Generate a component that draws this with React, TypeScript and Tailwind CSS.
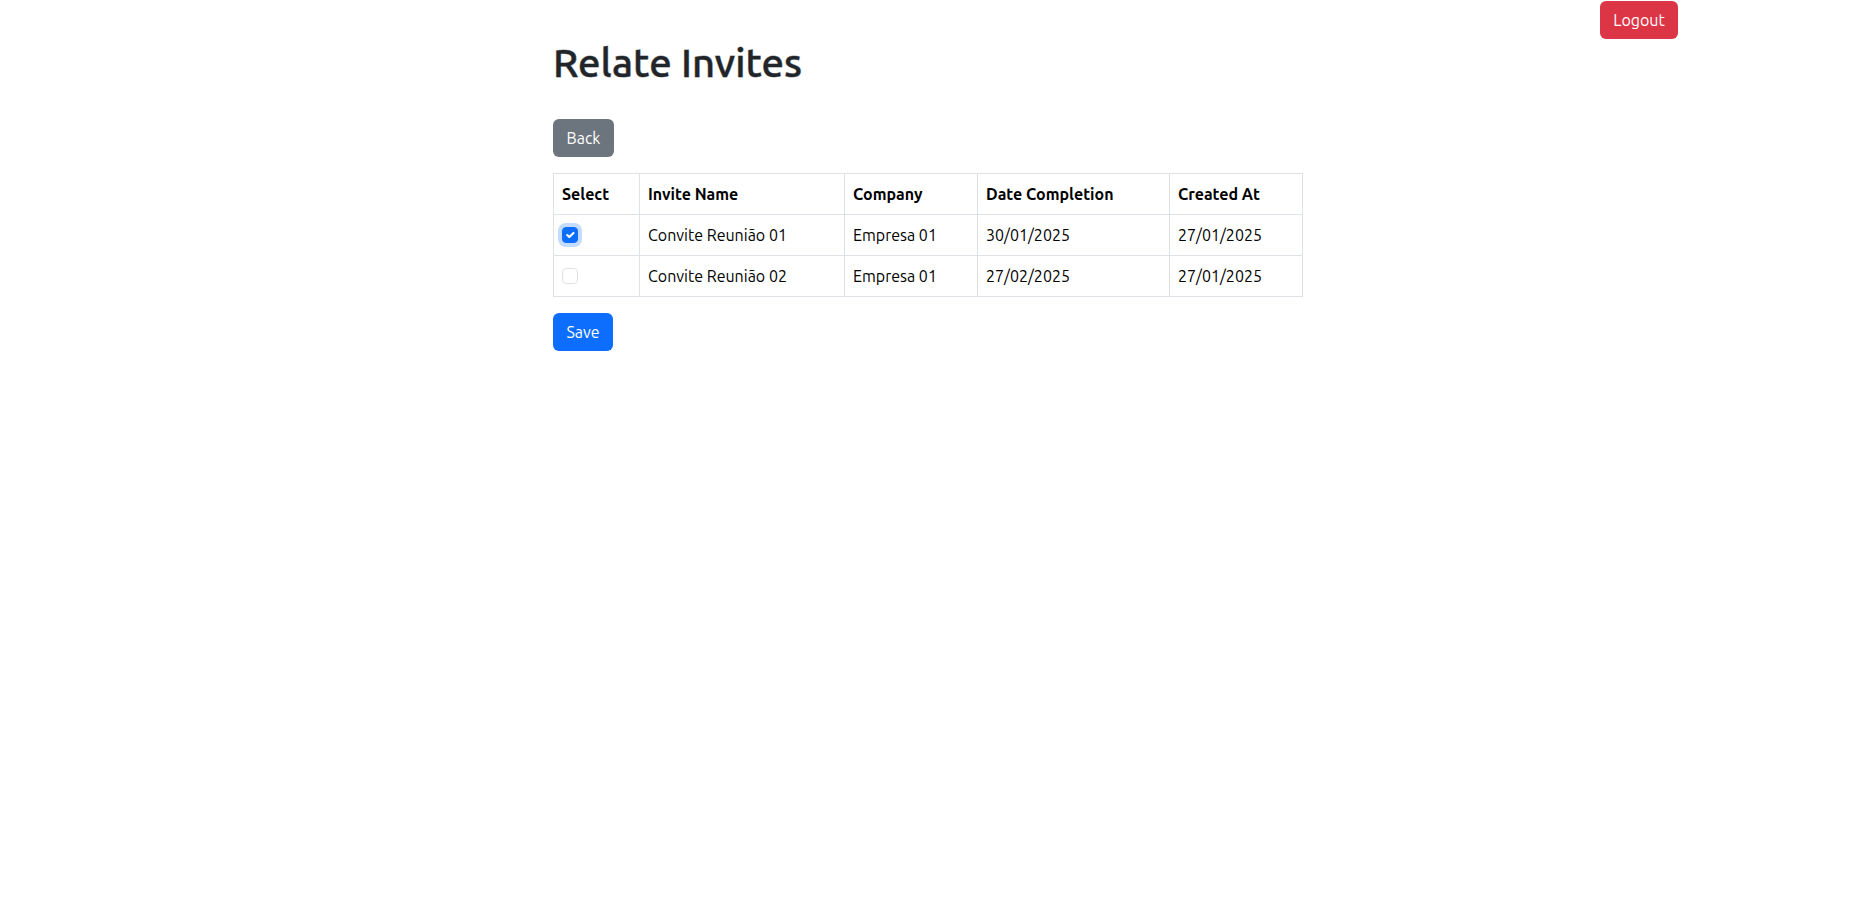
import { useState } from "react";

type Invite = {
  id: number;
  name: string;
  company: string;
  dateCompletion: string;
  createdAt: string;
};

const invites: Invite[] = [
  { id: 1, name: "Convite Reunião 01", company: "Empresa 01", dateCompletion: "30/01/2025", createdAt: "27/01/2025" },
  { id: 2, name: "Convite Reunião 02", company: "Empresa 01", dateCompletion: "27/02/2025", createdAt: "27/01/2025" },
];

const columns = [
  { label: "Select", width: "w-[86px]" },
  { label: "Invite Name", width: "w-[205px]" },
  { label: "Company", width: "w-[133px]" },
  { label: "Date Completion", width: "w-[192px]" },
  { label: "Created At", width: "w-[133px]" },
];

const button = "h-[38px] rounded-md text-center text-base text-white cursor-pointer";
const cell = "border border-[#dee2e6] p-2 text-left";

function InviteCheckbox({ label, checked, autoFocus, onToggle }: {
  label: string;
  checked: boolean;
  autoFocus: boolean;
  onToggle: () => void;
}) {
  return (
    <span className="grid h-6 w-4 items-center">
      <input
        type="checkbox"
        aria-label={label}
        checked={checked}
        autoFocus={autoFocus}
        onChange={onToggle}
        className="col-start-1 row-start-1 size-4 appearance-none rounded-sm border border-[#dee2e6] bg-white outline-none checked:border-[#0d6efd] checked:bg-[#0d6efd] focus:shadow-[0_0_0_4px_rgba(13,110,253,0.25)]"
      />
      {checked && (
        <svg viewBox="0 0 20 20" aria-hidden="true" className="pointer-events-none col-start-1 row-start-1 mx-px size-[14px]">
          <path d="m6 10 3 3 6-6" fill="none" stroke="#fff" strokeWidth="3" strokeLinecap="round" strokeLinejoin="round" />
        </svg>
      )}
    </span>
  );
}

export default function App() {
  const [selected, setSelected] = useState<number[]>([1]);

  const toggle = (id: number) =>
    setSelected((ids) => (ids.includes(id) ? ids.filter((item) => item !== id) : [...ids, id]));

  return (
    <div className="min-h-screen bg-white font-['Ubuntu','Noto_Sans',sans-serif] text-base text-[#212529]">
      <header className="flex justify-end pt-px pr-[180px]">
        <button type="button" className={`${button} w-[78px] bg-[#dc3545]`}>Logout</button>
      </header>
      <main className="mx-auto max-w-[752px] pr-0.5">
        <h1 className="mb-8 text-[40px] leading-[48px] font-medium [-webkit-text-stroke:1px_#21252980]">Relate Invites</h1>
        <button type="button" className={`${button} w-[61px] bg-[#6c757d]`}>Back</button>
        <table className="my-4 w-full table-fixed border-collapse text-black">
          <thead>
            <tr>
              {columns.map((column) => (
                <th key={column.label} scope="col" className={`${cell} ${column.width} font-bold whitespace-nowrap`}>
                  {column.label}
                </th>
              ))}
            </tr>
          </thead>
          <tbody>
            {invites.map((invite, index) => (
              <tr key={invite.id}>
                <td className={cell}>
                  <InviteCheckbox
                    label={`Select ${invite.name}`}
                    checked={selected.includes(invite.id)}
                    autoFocus={index === 0}
                    onToggle={() => toggle(invite.id)}
                  />
                </td>
                <td className={cell}>{invite.name}</td>
                <td className={cell}>{invite.company}</td>
                <td className={cell}>{invite.dateCompletion}</td>
                <td className={cell}>{invite.createdAt}</td>
              </tr>
            ))}
          </tbody>
        </table>
        <button type="button" className={`${button} w-[60px] bg-[#0d6efd]`}>Save</button>
      </main>
    </div>
  );
}
